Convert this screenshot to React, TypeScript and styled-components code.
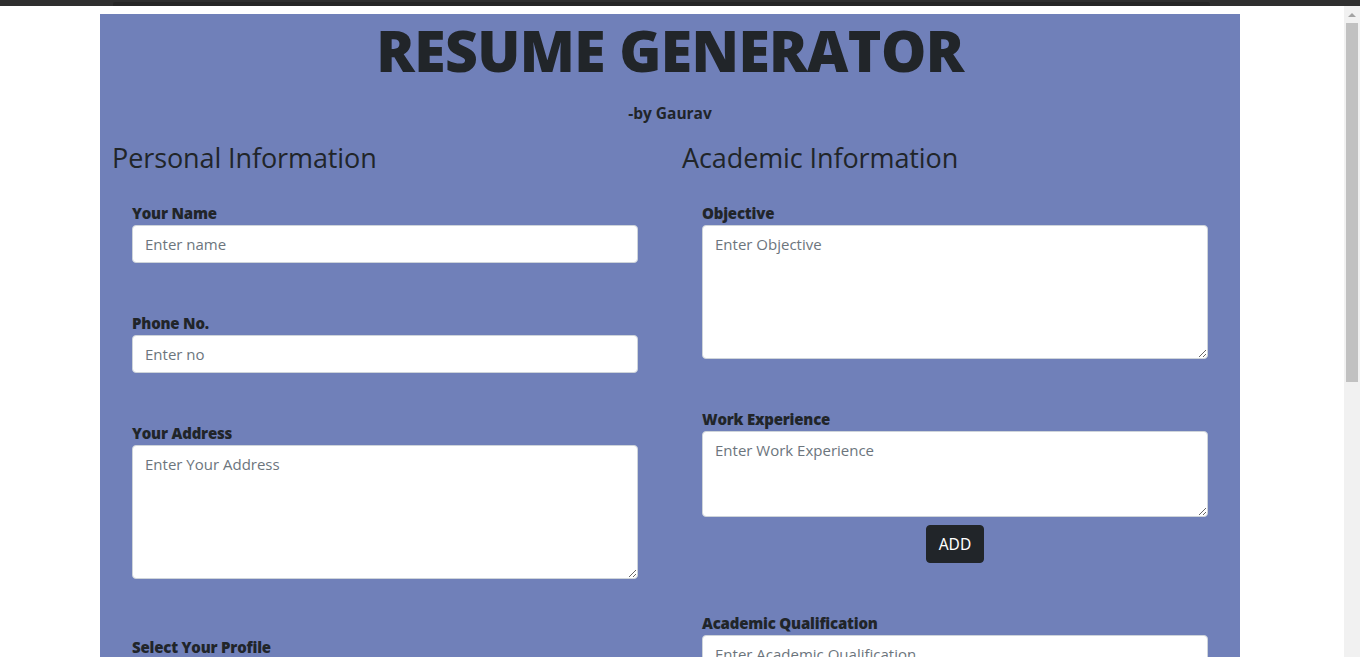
import React from "react";
import styled, { createGlobalStyle } from "styled-components";

const Global = createGlobalStyle`
  html, body { margin: 0; padding: 0; background: #fff; overflow: hidden; }
  body { font-family: "Open Sans", "Noto Sans", sans-serif; color: #212529; }
  * { box-sizing: border-box; }
`;

const Frame = styled.div`
  height: 657px;
  display: flex;
  flex-direction: column;
`;

const TopBar = styled.div`
  height: 6px;
  flex: none;
  background: #2f2f2f;
  display: flex;
  align-items: flex-end;
  padding-left: 113px;
  padding-right: 150px;
`;

const TopStrip = styled.div`
  flex: 1;
  height: 4px;
  background: #262626;
  border-radius: 2px 2px 0 0;
`;

const Main = styled.div`
  flex: 1;
  display: flex;
  min-height: 0;
`;

const Viewport = styled.div`
  flex: 1;
  overflow: hidden;
  padding: 8px 0 0 100px;
`;

const Container = styled.div`
  width: 1140px;
  min-height: 700px;
  background: #7080b9;
  padding: 0 12px;
`;

const Title = styled.h1`
  margin: 0;
  padding-top: 2px;
  text-align: center;
  font-size: 57px;
  font-weight: 800;
  line-height: 1.2;
  letter-spacing: -0.6px;
`;

const Byline = styled.p`
  margin: 18px 0 0;
  text-align: center;
  font-size: 15.5px;
  font-weight: 700;
  line-height: 1.5;
`;

const Row = styled.div`
  display: grid;
  grid-template-columns: 1fr 1fr;
  margin: 0 -12px;
`;

const Col = styled.div`
  padding: 0 12px;
`;

const SectionTitle = styled.h2`
  margin: 16px 0 0;
  font-size: 27px;
  font-weight: 400;
  line-height: 1.2;
  letter-spacing: -0.1px;
`;

const Fields = styled.div`
  padding: 27px 20px 0;
`;

const Group = styled.div<{ $extra?: number }>`
  margin-bottom: 48px;
  padding-top: ${(p) => p.$extra ?? 0}px;
  display: flex;
  flex-direction: column;
`;

const Label = styled.label`
  font-size: 15px;
  font-weight: 800;
  line-height: 24px;
  letter-spacing: -0.2px;
`;

const Input = styled.input`
  height: 38px;
  width: 100%;
  padding: 6px 12px;
  font-family: inherit;
  font-size: 15px;
  color: #212529;
  background: #fff;
  border: 1px solid #ced4da;
  border-radius: 4px;
  outline: none;
  &::placeholder { color: #6c757d; }
`;

const TextArea = styled.textarea<{ $h: number }>`
  height: ${(p) => p.$h}px;
  width: 100%;
  padding: 6px 12px;
  font-family: inherit;
  font-size: 15px;
  line-height: 24px;
  color: #212529;
  background: #fff;
  border: 1px solid #ced4da;
  border-radius: 4px;
  outline: none;
  resize: vertical;
  display: block;
  &::placeholder { color: #6c757d; }
`;

const ButtonRow = styled.div`
  display: flex;
  justify-content: center;
  margin-top: 8px;
`;

const DarkButton = styled.button`
  height: 38px;
  padding: 0 12px;
  background: #212529;
  color: #fff;
  border: 1px solid #212529;
  border-radius: 4px;
  font-family: "Noto Sans", sans-serif;
  font-size: 15.5px;
  line-height: 24px;
`;

const Scrollbar = styled.div`
  width: 16px;
  flex: none;
  background: #f1f1f1;
  display: flex;
  flex-direction: column;
  align-items: center;
`;

const Arrow = styled.div`
  width: 0;
  height: 0;
  margin-top: 7px;
  border-left: 4px solid transparent;
  border-right: 4px solid transparent;
  border-bottom: 4px solid #a3a3a3;
`;

const Thumb = styled.div`
  width: 12px;
  height: 359px;
  margin-top: 6px;
  background: #c1c1c1;
`;

export default function App() {
  return (
    <Frame>
      <Global />
      <TopBar>
        <TopStrip />
      </TopBar>
      <Main>
        <Viewport>
          <Container>
            <Title>RESUME GENERATOR</Title>
            <Byline>-by Gaurav</Byline>
            <Row>
              <Col>
                <SectionTitle>Personal Information</SectionTitle>
                <Fields>
                  <Group>
                    <Label>Your Name</Label>
                    <Input placeholder="Enter name" />
                  </Group>
                  <Group>
                    <Label>Phone No.</Label>
                    <Input placeholder="Enter no" />
                  </Group>
                  <Group>
                    <Label>Your Address</Label>
                    <TextArea $h={134} placeholder="Enter Your Address" />
                  </Group>
                  <Group $extra={8}>
                    <Label>Select Your Profile</Label>
                  </Group>
                </Fields>
              </Col>
              <Col>
                <SectionTitle>Academic Information</SectionTitle>
                <Fields>
                  <Group>
                    <Label>Objective</Label>
                    <TextArea $h={134} placeholder="Enter Objective" />
                  </Group>
                  <Group>
                    <Label>Work Experience</Label>
                    <TextArea $h={86} placeholder="Enter Work Experience" />
                    <ButtonRow>
                      <DarkButton>ADD</DarkButton>
                    </ButtonRow>
                  </Group>
                  <Group>
                    <Label>Academic Qualification</Label>
                    <Input placeholder="Enter Academic Qualification" />
                  </Group>
                </Fields>
              </Col>
            </Row>
          </Container>
        </Viewport>
        <Scrollbar>
          <Arrow />
          <Thumb />
        </Scrollbar>
      </Main>
    </Frame>
  );
}
